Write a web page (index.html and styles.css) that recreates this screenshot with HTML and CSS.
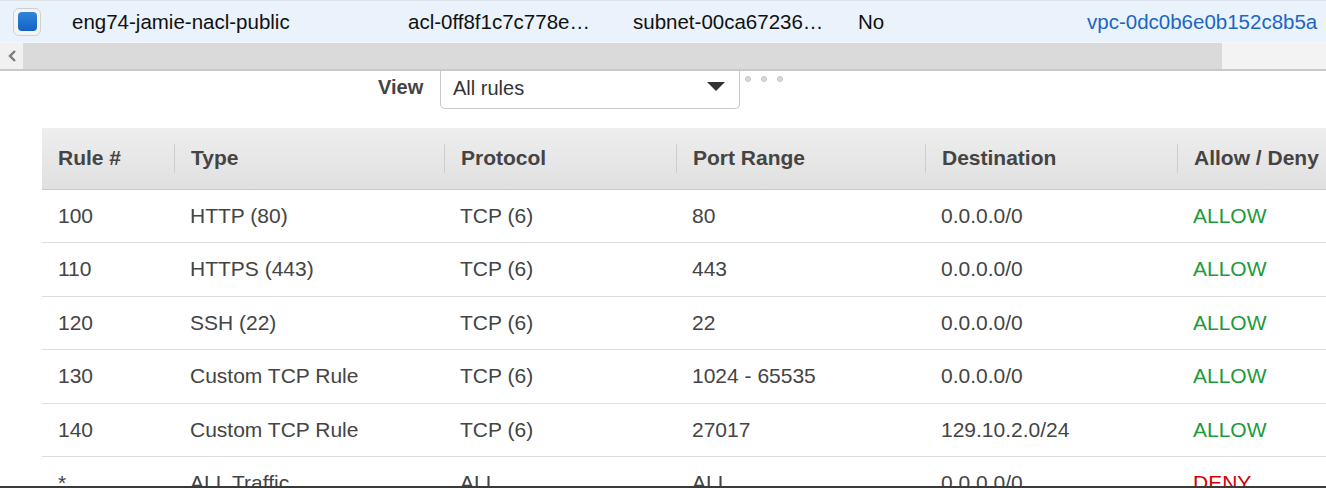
FILE: index.html
```html
<!DOCTYPE html>
<html>
<head>
<meta charset="utf-8">
<link rel="stylesheet" href="styles.css">
</head>
<body>
<div class="page">
  <div class="selrow">
    <div class="c c-check"><span class="cb"><span class="cb-in"></span></span></div>
    <div class="c c-name">eng74-jamie-nacl-public</div>
    <div class="c c-acl">acl-0ff8f1c7c778e…</div>
    <div class="c c-subnet">subnet-00ca67236…</div>
    <div class="c c-def">No</div>
    <div class="c c-vpc">vpc-0dc0b6e0b152c8b5a</div>
  </div>
  <div class="hscroll">
    <div class="hs-btn"><svg width="10" height="14" viewBox="0 0 10 14"><path d="M8 2 L3 7 L8 12" fill="none" stroke="#7a7a7a" stroke-width="2.4"/></svg></div>
    <div class="hs-thumb"></div>
    <div class="hs-track"></div>
  </div>
  <div class="toolbar">
    <span class="view-label">View</span>
    <div class="select">
      <span class="select-text">All rules</span>
      <svg class="caret" width="18" height="9" viewBox="0 0 18 9"><path d="M0 0 H18 L9 9 Z" fill="#333"/></svg>
    </div>
    <div class="dots"><span></span><span></span><span></span></div>
  </div>
  <div class="tablewrap">
    <table class="rules">
      <thead>
        <tr>
          <th class="w1">Rule #</th>
          <th class="w2">Type</th>
          <th class="w3">Protocol</th>
          <th class="w4">Port Range</th>
          <th class="w5">Destination</th>
          <th class="w6">Allow / Deny</th>
        </tr>
      </thead>
      <tbody>
        <tr><td>100</td><td>HTTP (80)</td><td>TCP (6)</td><td>80</td><td>0.0.0.0/0</td><td class="allow">ALLOW</td></tr>
        <tr><td>110</td><td>HTTPS (443)</td><td>TCP (6)</td><td>443</td><td>0.0.0.0/0</td><td class="allow">ALLOW</td></tr>
        <tr><td>120</td><td>SSH (22)</td><td>TCP (6)</td><td>22</td><td>0.0.0.0/0</td><td class="allow">ALLOW</td></tr>
        <tr><td>130</td><td>Custom TCP Rule</td><td>TCP (6)</td><td>1024 - 65535</td><td>0.0.0.0/0</td><td class="allow">ALLOW</td></tr>
        <tr><td>140</td><td>Custom TCP Rule</td><td>TCP (6)</td><td>27017</td><td>129.10.2.0/24</td><td class="allow">ALLOW</td></tr>
        <tr><td>*</td><td>ALL Traffic</td><td>ALL</td><td>ALL</td><td>0.0.0.0/0</td><td class="deny">DENY</td></tr>
      </tbody>
    </table>
  </div>
</div>
<div class="footer-edge"></div>
</body>
</html>
```

FILE: styles.css
```css
html, body {
  margin: 0;
  padding: 0;
  overflow: hidden;
  background: #fff;
  font-family: "Liberation Sans", Arial, sans-serif;
}
.page {
  width: 1326px;
  height: 488px;
  overflow: hidden;
}
.selrow {
  display: flex;
  align-items: center;
  height: 41px;
  background: #eaf2fc;
  border-top: 1px solid #dde3ea;
  font-size: 20.5px;
  color: #111;
  white-space: nowrap;
}
.c { flex: none; }
.c-check { width: 72px; display: flex; align-items: center; }
.cb {
  margin-left: 13px;
  width: 26px;
  height: 26px;
  border: 1px solid #cfcfcf;
  border-radius: 6px;
  background: #f4f4f4;
  display: flex;
  align-items: center;
  justify-content: center;
}
.cb-in {
  width: 19px;
  height: 19px;
  border-radius: 4px;
  background: linear-gradient(#2f85dc, #1461c2);
}
.c-name { width: 336px; }
.c-acl { width: 225px; }
.c-subnet { width: 225px; }
.c-def { width: 229px; }
.c-vpc { color: #1b67c2; }
.hscroll {
  display: flex;
  height: 26px;
  border-top: 1px solid #f4f6f9;
  border-bottom: 2px solid #c9c9c9;
  background: #f3f3f3;
}
.hs-btn {
  width: 23px;
  background: #f1f1f1;
  display: flex;
  align-items: center;
  justify-content: center;
}
.hs-thumb {
  width: 1199px;
  background: #dadada;
}
.hs-track { flex: 1; background: #f3f3f3; }
.toolbar {
  display: flex;
  align-items: flex-start;
  height: 57px;
  padding-left: 378px;
}
.view-label {
  font-weight: bold;
  font-size: 20px;
  color: #444;
  margin-top: 5px;
  width: 62px;
}
.select {
  height: 38px;
  border: 1px solid #c8c8c8;
  border-top: none;
  border-radius: 0 0 5px 5px;
  display: flex;
  align-items: center;
  justify-content: space-between;
  padding: 0 14px 0 12px;
  box-sizing: border-box;
  width: 300px;
}
.select-text {
  font-size: 20px;
  color: #333;
  margin-top: -3px;
}
.caret { margin-top: -6px; }
.dots {
  display: flex;
  gap: 10px;
  margin-left: 5px;
  margin-top: 5px;
}
.dots span {
  width: 6px;
  height: 6px;
  border-radius: 50%;
  background: #d9d9d9;
  border: 1px solid #c6c6c6;
  box-sizing: border-box;
}
.tablewrap {
  padding-left: 42px;
}
.rules {
  border-collapse: collapse;
  table-layout: fixed;
  width: 1400px;
  font-size: 21px;
  color: #444;
}
.rules th {
  height: 61px;
  box-sizing: border-box;
  background: linear-gradient(#eeeeee, #e0e0e0);
  border-bottom: 1px solid #c9c9c9;
  text-align: left;
  font-weight: bold;
  padding: 0 0 0 16px;
  position: relative;
  white-space: nowrap;
}
.rules th + th::before {
  content: "";
  position: absolute;
  left: 0;
  top: 16px;
  height: 29px;
  border-left: 1px solid #cdcdcd;
}
.rules th + th { padding-left: 17px; }
.w1 { width: 132px; }
.w2 { width: 270px; }
.w3 { width: 232px; }
.w4 { width: 249px; }
.w5 { width: 252px; }
.w6 { width: 265px; }
.rules td {
  height: 52.5px;
  padding: 0 0 0 16px;
  border-bottom: 1px solid #dedede;
  white-space: nowrap;
}
.allow { color: #1c9b3a; }
.deny { color: #d40000; }
.footer-edge {
  position: fixed;
  left: 0;
  right: 0;
  bottom: 0;
  height: 2px;
  background: #3a3a3a;
}
```
